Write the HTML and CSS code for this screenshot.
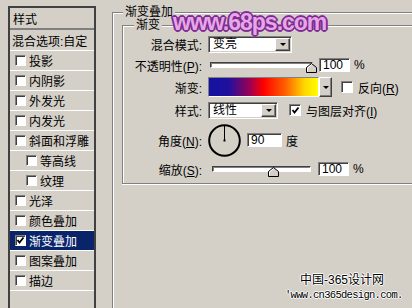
FILE: index.html
```html
<!DOCTYPE html>
<html lang="zh-CN">
<head>
    <meta charset="UTF-8">
    <title>图层样式</title>
    <link rel="stylesheet" href="styles.css">
</head>
<body>
    <div class="dialog">
        <!-- lista de estilos -->
        <ul class="style-list">
            <li class="list-head">样式</li>
            <li class="list-blend">混合选项:自定</li>
            <li><span class="box"></span>投影</li>
            <li><span class="box"></span>内阴影</li>
            <li><span class="box"></span>外发光</li>
            <li><span class="box"></span>内发光</li>
            <li><span class="box"></span>斜面和浮雕</li>
            <li class="sub"><span class="box"></span>等高线</li>
            <li class="sub"><span class="box"></span>纹理</li>
            <li><span class="box"></span>光泽</li>
            <li><span class="box"></span>颜色叠加</li>
            <li class="active"><span class="box"><svg width="9" height="9" viewBox="0 0 9 9"><polyline points="1.5,4 3.5,6.5 7.5,1.5" fill="none" stroke="#000" stroke-width="1.8"/></svg></span>渐变叠加</li>
            <li><span class="box"></span>图案叠加</li>
            <li><span class="box"></span>描边</li>
        </ul>

        <fieldset class="group outer">
            <legend>渐变叠加</legend>
            <fieldset class="group inner">
                <legend>渐变</legend>
                <div class="form-grid">
                    <label>混合模式:</label>
                    <div class="ctrl">
                        <div class="select mode-select"><span class="value">变亮</span><span class="drop"></span></div>
                    </div>

                    <label>不透明性(<u>P</u>):</label>
                    <div class="ctrl">
                        <div class="slider opacity-slider">
                            <div class="track"></div>
                            <svg class="thumb" style="left:96px" width="11" height="10" viewBox="0 0 11 10"><polygon points="0.5,4.5 5.5,0.5 10.5,4.5 10.5,9.5 0.5,9.5" fill="#d4d0c8" stroke="#000"/><polyline points="1.5,8.5 1.5,5 5.5,1.8" fill="none" stroke="#fff"/></svg>
                        </div>
                        <div class="num">100</div>
                        <span class="unit">%</span>
                    </div>

                    <label>渐变:</label>
                    <div class="ctrl">
                        <div class="gradient"></div>
                        <span class="drop tall"></span>
                        <span class="cb"></span>
                        <span>反向(<u>R</u>)</span>
                    </div>

                    <label>样式:</label>
                    <div class="ctrl">
                        <div class="select style-select"><span class="value">线性</span><span class="drop"></span></div>
                        <span class="cb align-cb"><svg width="9" height="9" viewBox="0 0 9 9"><polyline points="1.5,4 3.5,6.5 7.5,1.5" fill="none" stroke="#000" stroke-width="1.8"/></svg></span>
                        <span>与图层对齐(<u>I</u>)</span>
                    </div>

                    <label>角度(<u>N</u>):</label>
                    <div class="ctrl">
                        <svg class="dial" width="33" height="33" viewBox="0 0 33 33">
                            <circle cx="16.5" cy="16.5" r="15.3" fill="none" stroke="#000" stroke-width="2"/>
                            <line x1="16.5" y1="16.5" x2="16.5" y2="2" stroke="#000" stroke-width="1"/>
                            <rect x="15.5" y="15.5" width="2" height="2" fill="#000"/>
                        </svg>
                        <div class="num angle">90</div>
                        <span class="unit">度</span>
                    </div>

                    <label>缩放(<u>S</u>):</label>
                    <div class="ctrl">
                        <div class="slider scale-slider">
                            <div class="track"></div>
                            <svg class="thumb" style="left:56px" width="11" height="10" viewBox="0 0 11 10"><polygon points="0.5,4.5 5.5,0.5 10.5,4.5 10.5,9.5 0.5,9.5" fill="#d4d0c8" stroke="#000"/><polyline points="1.5,8.5 1.5,5 5.5,1.8" fill="none" stroke="#fff"/></svg>
                        </div>
                        <div class="num">100</div>
                        <span class="unit">%</span>
                    </div>
                </div>
            </fieldset>
        </fieldset>
    </div>

    <div class="mark-top">www.68ps.com</div>
    <div class="mark-bottom">
        <div class="mark-cn">中国-365设计网</div>
        <div class="mark-url">'www.cn365design.com.</div>
    </div>
</body>
</html>
```

FILE: styles.css
```css
body {
    margin: 0;
    width: 412px;
    height: 308px;
    overflow: hidden;
    position: relative;
    background-color: #d4d0c8;
    font-family: "Liberation Sans", "Noto Sans CJK SC", sans-serif;
    font-size: 12px;
    color: #000;
}

.dialog {
    display: flex;
    align-items: flex-start;
    height: 308px;
}

/* lista izquierda */
.style-list {
    list-style: none;
    margin: 6px 0 0 8px;
    padding: 0;
    width: 88px;
    height: 302px;
    box-sizing: border-box;
    border: 2px solid #404040;
    border-bottom: none;
    flex: none;
}

.style-list li {
    height: 19px;
    border-bottom: 1px solid #fff;
    display: flex;
    align-items: center;
    padding-left: 5px;
    white-space: nowrap;
}

.style-list .list-head {
    height: 20px;
    padding-left: 3px;
    border-bottom: 2px solid #808080;
}

.style-list .list-blend {
    height: 20px;
    padding-left: 2px;
}

.style-list .sub {
    padding-left: 16px;
}

.style-list .active {
    background-color: #0a246a;
    color: #fff;
}

.box {
    width: 11px;
    height: 11px;
    box-sizing: border-box;
    background-color: #fff;
    border: 1px solid;
    border-color: #808080 #fff #fff #808080;
    box-shadow: inset 1px 1px 0 #404040;
    margin-right: 3px;
    display: flex;
    align-items: center;
    justify-content: center;
}

/* grupos */
.group {
    border: 1px solid #808080;
    border-right: none;
    box-shadow: inset 1px 1px 0 #fff, 0 1px 0 #fff;
    margin: 0;
    padding: 0;
    min-width: 0;
    flex: none;
    box-sizing: border-box;
}

.group legend {
    background-color: #d4d0c8;
    padding: 0 2px;
}

.outer {
    margin: 5px 0 0 16px;
    width: 300px;
    height: 303px;
    border-bottom: none;
    box-shadow: inset 1px 1px 0 #fff;
}

.outer > legend {
    margin-left: 10px;
    line-height: 14px;
}

.inner {
    margin-left: 9px;
    width: 290px;
}

.inner > legend {
    margin-left: 11px;
    line-height: 12px;
}

.form-grid {
    display: grid;
    grid-template-columns: 79px auto;
    grid-template-rows: 17px 16px 20px 18px 34px 16px;
    column-gap: 6px;
    row-gap: 4px;
    align-items: center;
    padding: 5px 0 6px;
}

.form-grid label {
    text-align: right;
    white-space: nowrap;
}

.ctrl {
    display: flex;
    align-items: center;
    white-space: nowrap;
}

.select {
    display: flex;
    height: 17px;
    box-sizing: border-box;
    background-color: #fff;
    border: 1px solid;
    border-color: #808080 #fff #fff #808080;
    box-shadow: inset 1px 1px 0 #404040, inset -1px -1px 0 #d4d0c8;
    padding: 1px;
}

.mode-select {
    width: 84px;
}

.style-select {
    width: 70px;
}

.select .value {
    flex: 1;
    padding-left: 3px;
    line-height: 13px;
}

.drop {
    width: 15px;
    box-sizing: border-box;
    background-color: #d4d0c8;
    border: 1px solid;
    border-color: #fff #404040 #404040 #fff;
    box-shadow: inset -1px -1px 0 #808080;
    display: flex;
    align-items: center;
    justify-content: center;
}

.drop::after {
    content: "";
    border-left: 3px solid transparent;
    border-right: 3px solid transparent;
    border-top: 3px solid #000;
}

.drop.tall {
    width: 13px;
    height: 20px;
}

.slider {
    position: relative;
    height: 16px;
}

.opacity-slider {
    width: 103px;
    margin-left: 2px;
}

.scale-slider {
    width: 99px;
    margin-left: 4px;
    margin-right: 1px;
}

.track {
    margin-top: 5px;
    height: 6px;
    box-sizing: border-box;
    background-color: #fff;
    border: 1px solid;
    border-color: #404040 #fff #fff #404040;
    box-shadow: 1px 1px 0 #808080 inset;
}

.thumb {
    position: absolute;
    top: 6px;
}

.num {
    width: 31px;
    height: 14px;
    box-sizing: border-box;
    background-color: #fff;
    border: 1px solid;
    border-color: #808080 #fff #fff #808080;
    box-shadow: inset 1px 1px 0 #404040;
    margin-left: 6px;
    padding-left: 3px;
    line-height: 12px;
}

.num.angle {
    width: 35px;
}

.unit {
    margin-left: 4px;
}

.gradient {
    width: 111px;
    height: 20px;
    box-sizing: border-box;
    border: 1px solid;
    border-color: #808080 #fff #fff #808080;
    background: linear-gradient(to right, #14129e 0%, #2010a0 18%, #a00050 38%, #ff0000 50%, #ff6000 70%, #ffd800 88%, #ffff00 100%);
}

.cb {
    width: 12px;
    height: 12px;
    box-sizing: border-box;
    background-color: #fff;
    border: 1px solid;
    border-color: #808080 #fff #fff #808080;
    box-shadow: inset 1px 1px 0 #404040;
    margin: 0 5px 0 9px;
    display: flex;
    align-items: center;
    justify-content: center;
}

.align-cb {
    margin-left: 11px;
}

.dial {
    display: block;
}

/* marcas de agua */
.mark-top {
    position: absolute;
    left: 173px;
    top: 11px;
    font-family: "Liberation Sans", sans-serif;
    font-weight: bold;
    font-size: 23px;
    line-height: 23px;
    letter-spacing: -1px;
    color: #e7a6ea;
    text-shadow: 1px 0 0 #7b2c8c, -1px 0 0 #7b2c8c, 0 1px 0 #7b2c8c, 0 -1px 0 #7b2c8c,
        1px 1px 0 #7b2c8c, -1px -1px 0 #7b2c8c, 1px -1px 0 #7b2c8c, -1px 1px 0 #7b2c8c,
        2px 0 0 #8a3a9a, -2px 0 0 #8a3a9a, 0 2px 0 #8a3a9a, 0 -2px 0 #8a3a9a,
        0 0 4px #f2d2f2;
}

.mark-bottom {
    position: absolute;
    left: 300px;
    top: 273px;
    text-shadow: 1px 0 0 #fff, -1px 0 0 #fff, 0 1px 0 #fff, 0 -1px 0 #fff;
}

.mark-cn {
    line-height: 14px;
}

.mark-url {
    margin: 2px 0 0 -15px;
    font-family: "Liberation Mono", monospace;
    font-size: 10.5px;
    line-height: 12px;
    letter-spacing: -0.7px;
    white-space: nowrap;
}
```
